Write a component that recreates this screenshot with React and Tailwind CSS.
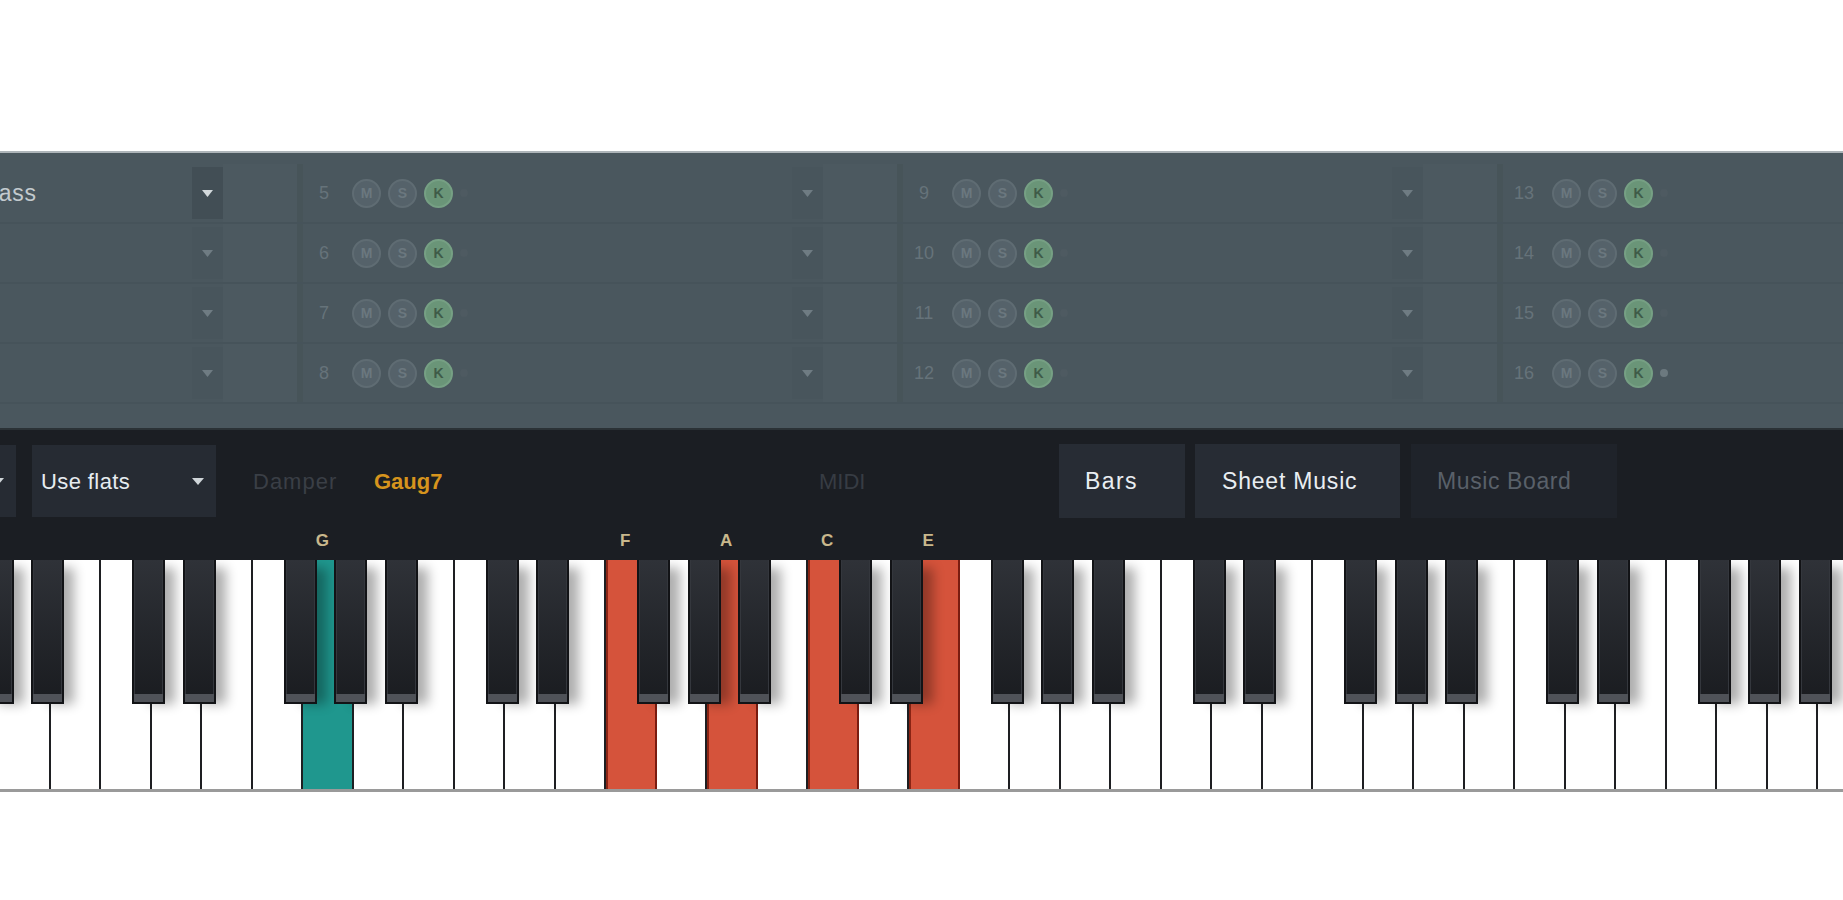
const NOTES = ["A", "B", "C", "D", "E", "F", "G"];
const HAS_SHARP = { A: true, C: true, D: true, F: true, G: true };
const PRESSED = { 6: "teal", 12: "red", 14: "red", 16: "red", 18: "red" };
const LABELS = { 6: "G", 12: "F", 14: "A", 16: "C", 18: "E" };

const keys = [];
for (let i = -1; i <= 36; i++) keys.push(i);

const channelCols = [
  { base: 1, names: ["Acoustic Bass", "", "", ""] },
  { base: 5, names: ["", "", "", ""] },
  { base: 9, names: ["", "", "", ""] },
  { base: 13, names: ["", "", "", ""] },
];

function Arrow({ bright }) {
  return (
    <svg width="11" height="7" viewBox="0 0 11 7">
      <path d="M0 0 L11 0 L5.5 7 Z" fill={bright ? "#d3d9dc" : "#6f7c83"} />
    </svg>
  );
}

function Circle({ letter, on }) {
  return (
    <div
      className={`flex h-[29px] w-[29px] items-center justify-center rounded-full border-2 text-[14px] font-bold ${
        on ? "border-[#76a084] bg-[#6a9578] text-[#3f5b48]" : "border-[#5f6c73] bg-[#55626a] text-[#6b787f]"
      }`}
    >
      {letter}
    </div>
  );
}

function ChannelRow({ num, name, first, last }) {
  return (
    <div className="flex h-[60px] border-b-2 border-[#46535a]">
      <div className="flex w-[42px] items-center justify-center text-[18px] text-[#66737a]">{num}</div>
      <div className="flex w-[135px] items-center gap-[7px] pl-[7px]">
        <Circle letter="M" />
        <Circle letter="S" />
        <Circle letter="K" on />
        <div className={`h-[8px] w-[8px] rounded-full ${last ? "bg-[#6c797f]" : "bg-[#4e5a61]"}`} />
      </div>
      <div className="flex w-[312px] items-center overflow-hidden whitespace-nowrap pl-[2px] text-[23px] tracking-[0.8px] text-[#c3cace]">
        {name}
      </div>
      <div className="flex w-[31px] items-center justify-center py-[3px]">
        <div className={`flex h-full w-full items-center justify-center ${first ? "bg-[#424e55]" : "bg-[#48555c]"}`}>
          <Arrow bright={first} />
        </div>
      </div>
      <div className="w-[74px] bg-[#4c5960]" />
      <div className="w-[6px] bg-[#475459]" />
    </div>
  );
}

function ChannelPanel() {
  return (
    <div className="h-[279px] overflow-hidden border-t-2 border-b-2 border-t-[#aeb5b9] border-b-[#2b3236] bg-[#4a575e] pt-[11px]">
      <div className="ml-[-297px] flex">
        {channelCols.map((col) => (
          <div key={col.base} className="w-[600px] shrink-0">
            {col.names.map((name, r) => (
              <ChannelRow key={r} num={col.base + r} name={name} first={r === 0 && col.base === 1} last={col.base + r === 16} />
            ))}
          </div>
        ))}
      </div>
    </div>
  );
}

function SelectBox({ label, className = "" }) {
  return (
    <div className={`flex h-[72px] w-[184px] shrink-0 items-center justify-between bg-[#262b33] pl-[9px] pr-[12px] ${className}`}>
      <span className="text-[22px] tracking-[0.4px] text-[#e6ecf0]">{label}</span>
      <svg width="12" height="7" viewBox="0 0 12 7">
        <path d="M0 0 L12 0 L6 7 Z" fill="#cfd5d9" />
      </svg>
    </div>
  );
}

function Toolbar() {
  return (
    <div className="h-[130px] bg-[#1b1e23] pt-[15px]">
      <div className="flex h-[72px] items-center whitespace-nowrap">
        <SelectBox label="" className="ml-[-168px]" />
        <SelectBox label="Use flats" className="ml-[16px]" />
        <div className="ml-[37px] w-[85px] text-[22px] tracking-[1px] text-[#3a3f46]">Damper</div>
        <div className="ml-[36px] w-[67px] text-[22px] font-bold text-[#d6941d]">Gaug7</div>
        <div className="ml-[378px] w-[44px] text-[22px] text-[#373c43]">MIDI</div>
        <div className="ml-[196px] flex h-[74px] w-[126px] items-center bg-[#272c34] pl-[26px] text-[23px] tracking-[1.4px] text-[#e9eef2]">
          Bars
        </div>
        <div className="ml-[10px] flex h-[74px] w-[205px] items-center bg-[#272c34] pl-[27px] text-[23px] tracking-[0.8px] text-[#e9eef2]">
          Sheet Music
        </div>
        <div className="ml-[11px] flex h-[74px] w-[206px] items-center bg-[#1f232a] pl-[26px] text-[23px] tracking-[0.6px] text-[#596069]">
          Music Board
        </div>
      </div>
      <div className="mt-[5px] ml-[-50.5px] flex h-[38px]">
        {keys.map((i) => (
          <div key={i} className="flex w-[50.5px] shrink-0 items-center justify-center pr-[12px] text-[17px] font-bold text-[#c9b88c]">
            {LABELS[i] || ""}
          </div>
        ))}
      </div>
    </div>
  );
}

function BlackKey() {
  return (
    <div className="absolute top-0 right-[-15.5px] z-10 flex h-[144px] w-[33px] flex-col border-x-2 border-b-2 border-[#121316] bg-linear-to-b from-[#2f3238] to-[#1a1c20] shadow-[14px_4px_12px_-4px_rgba(0,0,0,0.32)]">
      <div className="flex-1 border-x border-[#34373d]" />
      <div className="h-[8px] bg-[#4f5258]" />
    </div>
  );
}

function WhiteKey({ i }) {
  const note = NOTES[(i + 7) % 7];
  const p = PRESSED[i];
  const bg =
    p === "teal"
      ? "bg-[#1f978e] border-r-[#1e1f22]"
      : p === "red"
      ? "bg-[#d5533b] border-l-2 border-l-[#8a2414] border-r-[#7a1c10]"
      : "bg-white border-r-[#1e1f22]";
  return (
    <div className={`relative h-full w-[50.5px] shrink-0 border-r-2 ${bg}`}>
      {HAS_SHARP[note] && <BlackKey />}
    </div>
  );
}

function Keyboard() {
  return (
    <div className="h-[232px] overflow-hidden border-b-[3px] border-[#9a9a9a]">
      <div className="ml-[-50.5px] flex h-full">
        {keys.map((i) => (
          <WhiteKey key={i} i={i} />
        ))}
      </div>
    </div>
  );
}

export default function App() {
  return (
    <div className="h-[900px] w-[1843px] overflow-hidden bg-white pt-[151px] font-['Liberation_Sans',Arial,sans-serif]">
      <ChannelPanel />
      <Toolbar />
      <Keyboard />
    </div>
  );
}
